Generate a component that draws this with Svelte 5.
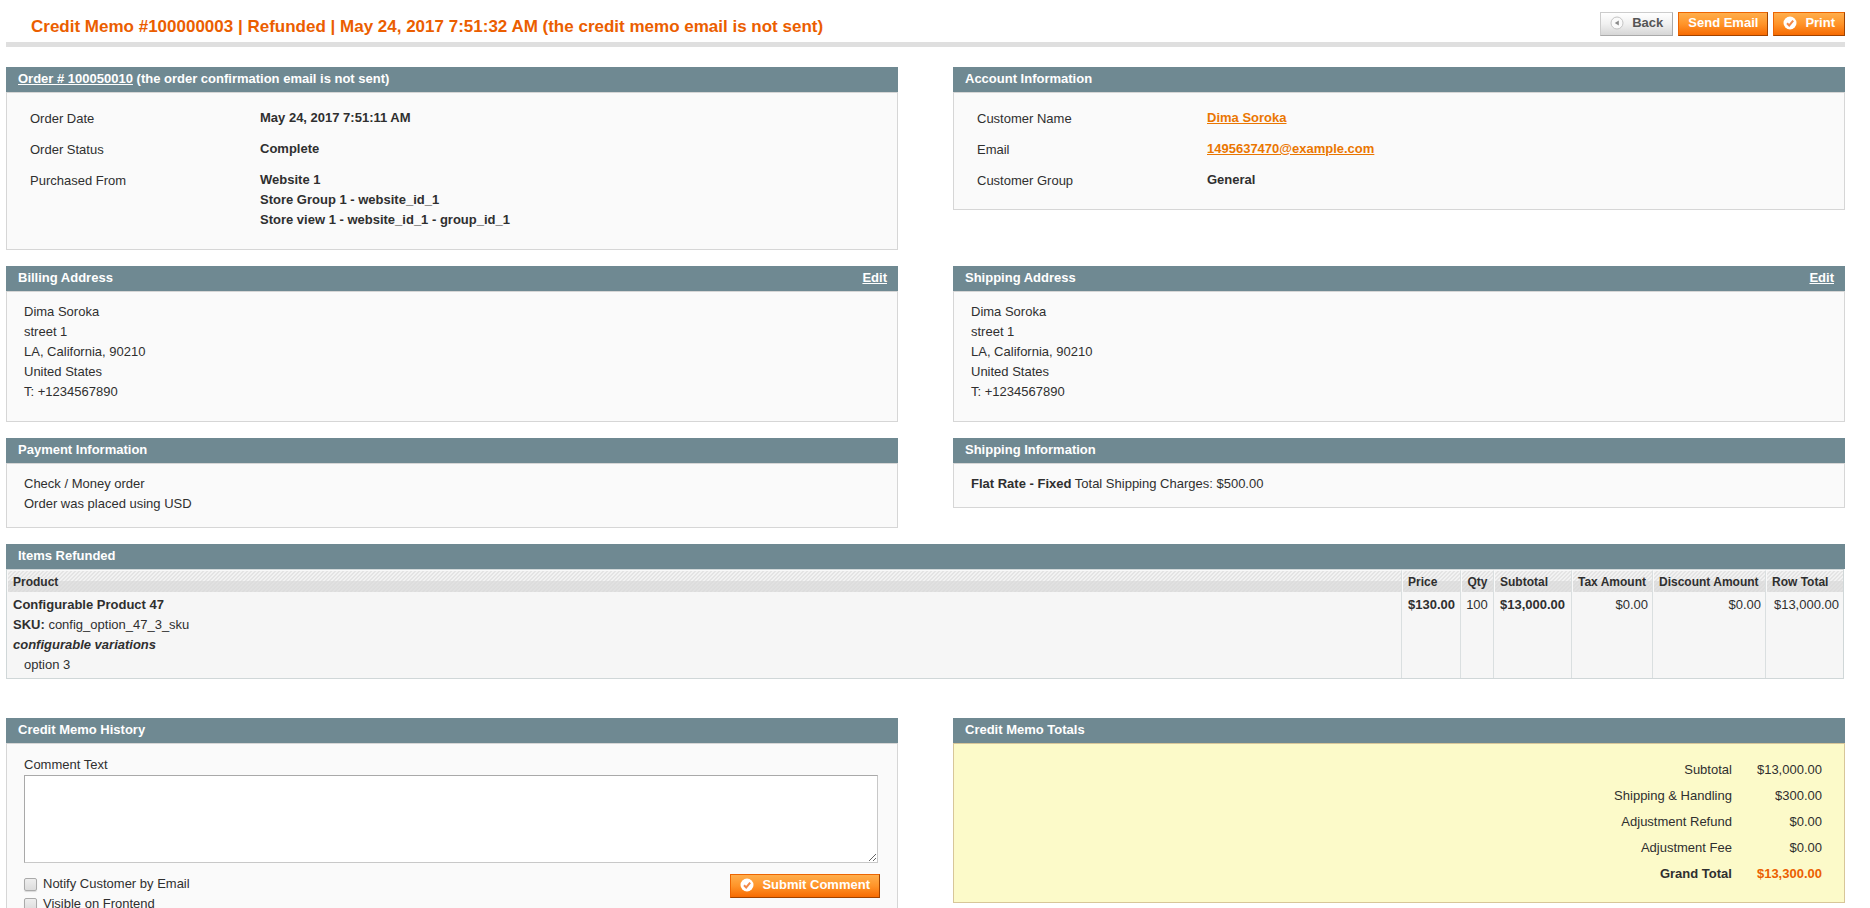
<script>
  const addressLines = ['Dima Soroka', 'street 1', 'LA, California, 90210', 'United States', 'T: +1234567890'];

  const addresses = [
    { title: 'Billing Address', lines: addressLines },
    { title: 'Shipping Address', lines: addressLines }
  ];

  const totals = [
    { label: 'Subtotal', value: '$13,000.00' },
    { label: 'Shipping & Handling', value: '$300.00' },
    { label: 'Adjustment Refund', value: '$0.00' },
    { label: 'Adjustment Fee', value: '$0.00' },
    { label: 'Grand Total', value: '$13,300.00', grand: true }
  ];

  let comment = $state('');
  let notify = $state(false);
  let visible = $state(false);
</script>

{#snippet checkIcon()}
  <svg class="icon" viewBox="0 0 14 14" aria-hidden="true">
    <circle cx="7" cy="7" r="6.5" fill="#fff" />
    <path d="M4 7.2 6.2 9.4 10.2 4.6" fill="none" stroke="#f3894a" stroke-width="2" />
  </svg>
{/snippet}

<div class="page">
  <header class="content-header">
    <h1>Credit Memo #100000003 | Refunded | May 24, 2017 7:51:32 AM (the credit memo email is not sent)</h1>
    <div class="buttons">
      <button type="button" class="back">
        <svg class="icon" viewBox="0 0 14 14" aria-hidden="true">
          <circle cx="7" cy="7" r="6" fill="#fafafa" stroke="#c4c4c4" />
          <path d="M8.8 4.4v5.2L4.8 7z" fill="#8a8a8a" />
        </svg>
        Back
      </button>
      <button type="button">Send Email</button>
      <button type="button">{@render checkIcon()}Print</button>
    </div>
  </header>

  <div class="columns">
    <section>
      <div class="head">
        <h2><a href="#order">Order # 100050010</a> (the order confirmation email is not sent)</h2>
      </div>
      <div class="body facts">
        <table>
          <tbody>
            <tr><th scope="row">Order Date</th><td>May 24, 2017 7:51:11 AM</td></tr>
            <tr><th scope="row">Order Status</th><td>Complete</td></tr>
            <tr>
              <th scope="row">Purchased From</th>
              <td>Website 1<br />Store Group 1 - website_id_1<br />Store view 1 - website_id_1 - group_id_1</td>
            </tr>
          </tbody>
        </table>
      </div>
    </section>
    <section>
      <div class="head"><h2>Account Information</h2></div>
      <div class="body facts">
        <table>
          <tbody>
            <tr><th scope="row">Customer Name</th><td><a href="#customer">Dima Soroka</a></td></tr>
            <tr><th scope="row">Email</th><td><a href="mailto:1495637470@example.com">1495637470@example.com</a></td></tr>
            <tr><th scope="row">Customer Group</th><td>General</td></tr>
          </tbody>
        </table>
      </div>
    </section>
  </div>

  <div class="columns">
    {#each addresses as address}
      <section>
        <div class="head"><h2>{address.title}</h2><a href="#edit">Edit</a></div>
        <address class="body">
          {#each address.lines as line}<div>{line}</div>{/each}
        </address>
      </section>
    {/each}
  </div>

  <div class="columns">
    <section>
      <div class="head"><h2>Payment Information</h2></div>
      <div class="body">
        <div>Check / Money order</div>
        <div>Order was placed using USD</div>
      </div>
    </section>
    <section>
      <div class="head"><h2>Shipping Information</h2></div>
      <div class="body"><strong>Flat Rate - Fixed</strong> Total Shipping Charges: $500.00</div>
    </section>
  </div>

  <section class="items">
    <div class="head"><h2>Items Refunded</h2></div>
    <table>
      <colgroup>
        <col />
        <col class="price" />
        <col class="qty" />
        <col class="amount" />
        <col class="tax" />
        <col class="discount" />
        <col class="total" />
      </colgroup>
      <thead>
        <tr>
          <th>Product</th>
          <th>Price</th>
          <th class="center">Qty</th>
          <th>Subtotal</th>
          <th>Tax Amount</th>
          <th>Discount Amount</th>
          <th>Row Total</th>
        </tr>
      </thead>
      <tbody>
        <tr>
          <td>
            <div><strong>Configurable Product 47</strong></div>
            <div><strong>SKU:</strong> config_option_47_3_sku</div>
            <div><strong><em>configurable variations</em></strong></div>
            <div class="option">option 3</div>
          </td>
          <td><strong>$130.00</strong></td>
          <td class="center">100</td>
          <td><strong>$13,000.00</strong></td>
          <td class="right">$0.00</td>
          <td class="right">$0.00</td>
          <td class="right">$13,000.00</td>
        </tr>
      </tbody>
    </table>
  </section>

  <div class="columns">
    <section>
      <div class="head"><h2>Credit Memo History</h2></div>
      <form class="body history" onsubmit={(event) => event.preventDefault()}>
        <label class="caption" for="comment">Comment Text</label>
        <textarea id="comment" bind:value={comment}></textarea>
        <div class="actions">
          <div>
            <label class="check"><input type="checkbox" bind:checked={notify} />Notify Customer by Email</label>
            <label class="check"><input type="checkbox" bind:checked={visible} />Visible on Frontend</label>
          </div>
          <button type="submit">{@render checkIcon()}Submit Comment</button>
        </div>
      </form>
    </section>
    <section>
      <div class="head"><h2>Credit Memo Totals</h2></div>
      <div class="body totals">
        <table>
          <tbody>
            {#each totals as row}
              <tr class:grand={row.grand}><th scope="row">{row.label}</th><td>{row.value}</td></tr>
            {/each}
          </tbody>
        </table>
      </div>
    </section>
  </div>
</div>

<style>
  :global(body) {
    margin: 0;
    background: #fff;
  }

  .page {
    box-sizing: border-box;
    height: 100vh;
    overflow-y: auto;
    scrollbar-width: none;
    padding: 12px 25px 0 6px;
    color: #2f2f2f;
    font: 13px/20px Arial, "Liberation Sans", sans-serif;
  }

  .content-header {
    display: flex;
    justify-content: space-between;
    align-items: flex-start;
    padding-bottom: 5px;
    margin-bottom: 20px;
    border-bottom: 5px solid #dfdfdf;
  }

  h1 {
    margin: 0;
    padding: 5px 0 0 25px;
    color: #eb5e00;
    font-size: 17px;
    line-height: 20px;
  }

  .buttons {
    display: flex;
    gap: 5px;
  }

  button {
    display: flex;
    align-items: center;
    gap: 8px;
    box-sizing: border-box;
    height: 24px;
    padding: 0 9px 2px;
    border: 1px solid;
    border-color: #ed6502 #a04300 #a04300 #ed6502;
    background: linear-gradient(#ffae4c, #ff9429 50%, #f76b02);
    color: #fff;
    font: bold 13px/20px Arial, "Liberation Sans", sans-serif;
    white-space: nowrap;
    cursor: pointer;
  }

  .back {
    border-color: #ccc #aaa #aaa #ccc;
    background: linear-gradient(#fff, #f0f0f0 50%, #d6d6d6);
    color: #555;
  }

  .icon {
    width: 14px;
    height: 14px;
  }

  .columns {
    display: grid;
    grid-template-columns: 1fr 1fr;
    column-gap: 55px;
    align-items: start;
    margin-bottom: 16px;
  }

  .head {
    display: flex;
    justify-content: space-between;
    padding: 2px 11px 3px 12px;
    background: #6f8992;
    color: #fff;
    font-weight: bold;
  }

  .head a {
    color: #fff;
  }

  h2 {
    margin: 0;
    font-size: inherit;
  }

  .body {
    padding: 10px 17px 13px;
    border: 1px solid #d6d6d6;
    background: #fafafa;
    font-style: normal;
  }

  address.body {
    padding-bottom: 19px;
  }

  table {
    border-collapse: collapse;
  }

  th {
    text-align: left;
  }

  td {
    vertical-align: top;
  }

  .facts {
    padding-left: 23px;
  }

  .facts th {
    width: 230px;
    padding: 6px 0 5px;
    font-weight: normal;
    vertical-align: top;
  }

  .facts td {
    padding: 5px 0 6px;
    font-weight: bold;
  }

  .facts a {
    color: #ea7601;
  }

  .items {
    margin-bottom: 39px;
  }

  .items table {
    width: calc(100% - 1px);
    table-layout: fixed;
    border-collapse: separate;
    border-spacing: 0;
    border: 1px solid #d0d7d8;
    background: #f6f6f6;
  }

  .price {
    width: 59px;
  }

  .qty {
    width: 33px;
  }

  .amount {
    width: 78px;
  }

  .tax {
    width: 81px;
  }

  .discount {
    width: 113px;
  }

  .total {
    width: 77px;
  }

  .items th,
  .items td {
    border-right: 1px solid #dadfe0;
    white-space: nowrap;
  }

  .items th {
    padding: 1px 4px 0 5px;
    border-left: 1px solid #f9f9f9;
    border-top: 1px solid #f9f9f9;
    background:
      linear-gradient(#fff0 50%, #d9d9d9b0 50%),
      linear-gradient(135deg, #fff8 25%, #fff0 25% 50%, #fff8 50% 75%, #fff0 75%) 0 0 / 4px 4px,
      #e4e4e4;
    font-size: 12px;
    line-height: 20px;
  }

  .items td {
    padding: 3px 4px 3px 6px;
  }

  .items th:last-child,
  .items td:last-child {
    border-right: 0;
  }

  .items .option {
    padding-left: 11px;
  }

  .items .center {
    padding-right: 3px;
    padding-left: 3px;
    text-align: center;
  }

  .items .right {
    text-align: right;
  }

  .caption {
    display: block;
  }

  textarea {
    display: block;
    box-sizing: border-box;
    width: calc(100% - 2px);
    height: 88px;
    margin: 0;
    border: 1px solid;
    border-color: #a9a9a9 #c8c8c8 #c8c8c8 #a9a9a9;
    border-radius: 0;
    background: #fff;
    font: inherit;
    resize: both;
  }

  .history {
    padding-top: 11px;
  }

  .actions {
    display: flex;
    justify-content: space-between;
    align-items: flex-start;
    padding-top: 11px;
  }

  .check {
    display: flex;
    align-items: center;
    gap: 6px;
  }

  .check input {
    appearance: none;
    box-sizing: border-box;
    width: 13px;
    height: 13px;
    margin: 0;
    border: 1px solid #aaa;
    border-radius: 2px;
    background: linear-gradient(#eee, #dcdcdc);
    box-shadow: 0 1px 1px #0002;
  }

  .check input:checked {
    background: #6f8992;
  }

  .totals {
    display: flex;
    justify-content: flex-end;
    padding: 13px 22px 15px;
    border-color: #d7c699;
    background: #fcfac9;
  }

  .totals th,
  .totals td {
    padding: 3px 0;
    font-weight: normal;
    text-align: right;
  }

  .totals td {
    padding-left: 25px;
  }

  .totals .grand th,
  .totals .grand td {
    font-weight: bold;
  }

  .totals .grand td {
    color: #eb5e00;
  }
</style>
